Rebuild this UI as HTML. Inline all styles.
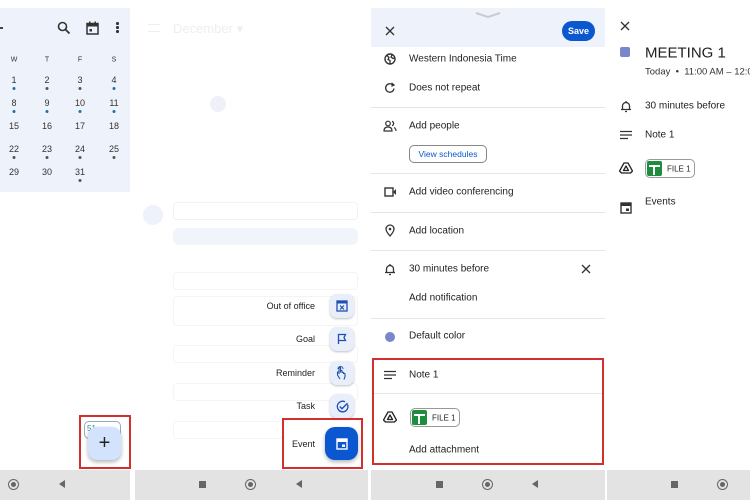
<!DOCTYPE html>
<html><head><meta charset="utf-8"><style>
*{margin:0;padding:0;box-sizing:border-box}
body{width:750px;height:500px;position:relative;overflow:hidden;background:#fff;font-family:"Liberation Sans",sans-serif;color:#1f1f1f}
.a{position:absolute}
.t{position:absolute;font-size:10px;white-space:nowrap;transform:translateY(-50%)}
.c{position:absolute;font-size:9px;transform:translate(-50%,-50%);color:#333}
.dot{position:absolute;width:3px;height:3px;border-radius:50%;background:#1a73a8;transform:translateX(-50%)}
.hr{position:absolute;height:1px;background:#e5e5e5}
.nav{position:absolute;top:470px;height:30px;background:#e3e3e3}
.sq{position:absolute;width:7px;height:7px;background:#666;top:481px}
.ci{position:absolute;width:11px;height:11px;border-radius:50%;border:1.5px solid #666;top:479px}
.ci::after{content:"";position:absolute;left:1.5px;top:1.5px;width:5px;height:5px;border-radius:50%;background:#666}
.tr{position:absolute;top:480px;width:0;height:0;border-top:4px solid transparent;border-bottom:4px solid transparent;border-right:6px solid #666}
.red{position:absolute;border:2px solid #d32f2f}
.sf{position:absolute;width:24px;height:24px;border-radius:7px;background:#e8eefa;box-shadow:0 1px 2px rgba(0,0,0,.25)}
.fl{position:absolute;font-size:9px;transform:translateY(-50%);right:0;text-align:right}
.ico{position:absolute}
</style></head><body>

<!-- Panel 1 -->
<div class="a" style="left:0;top:8px;width:130px;height:184px;background:#eef2fa"></div>
<div class="a" style="left:0;top:27px;width:3px;height:2px;background:#444"></div>
<svg class="ico" style="left:57px;top:21px" width="14" height="14" viewBox="0 0 14 14"><circle cx="5.5" cy="5.5" r="4" fill="none" stroke="#333" stroke-width="1.6"/><line x1="8.5" y1="8.5" x2="12.5" y2="12.5" stroke="#333" stroke-width="1.8"/></svg>
<svg class="ico" style="left:86px;top:21px" width="13" height="14" viewBox="0 0 13 14"><rect x="1" y="2.5" width="11" height="10.5" fill="none" stroke="#333" stroke-width="1.5"/><rect x="1" y="2.5" width="11" height="3" fill="#333"/><rect x="3" y="0.5" width="1.5" height="3" fill="#333"/><rect x="8.5" y="0.5" width="1.5" height="3" fill="#333"/><rect x="3.5" y="8" width="2.5" height="2.5" fill="#333"/></svg>
<div class="a" style="left:116px;top:22px;width:2.5px;height:2.5px;background:#333;border-radius:50%;box-shadow:0 4px 0 #333,0 8px 0 #333"></div>
<div class="c" style="left:14px;top:60px;font-size:7px">W</div><div class="c" style="left:47px;top:60px;font-size:7px">T</div><div class="c" style="left:80px;top:60px;font-size:7px">F</div><div class="c" style="left:114px;top:60px;font-size:7px">S</div>
<div class="c" style="left:14px;top:80px">1</div><div class="c" style="left:47px;top:80px">2</div><div class="c" style="left:80px;top:80px">3</div><div class="c" style="left:114px;top:80px">4</div>
<div class="dot" style="left:14px;top:87px"></div><div class="dot" style="left:47px;top:87px;background:#555"></div><div class="dot" style="left:80px;top:87px;background:#555"></div><div class="dot" style="left:114px;top:87px"></div>
<div class="c" style="left:14px;top:103px">8</div><div class="c" style="left:47px;top:103px">9</div><div class="c" style="left:80px;top:103px">10</div><div class="c" style="left:114px;top:103px">11</div>
<div class="dot" style="left:14px;top:110px"></div><div class="dot" style="left:47px;top:110px"></div><div class="dot" style="left:80px;top:110px"></div><div class="dot" style="left:114px;top:110px"></div>
<div class="c" style="left:14px;top:126px">15</div><div class="c" style="left:47px;top:126px">16</div><div class="c" style="left:80px;top:126px">17</div><div class="c" style="left:114px;top:126px">18</div>
<div class="c" style="left:14px;top:149px">22</div><div class="c" style="left:47px;top:149px">23</div><div class="c" style="left:80px;top:149px">24</div><div class="c" style="left:114px;top:149px">25</div>
<div class="dot" style="left:14px;top:156px;background:#555"></div><div class="dot" style="left:47px;top:156px;background:#555"></div><div class="dot" style="left:80px;top:156px;background:#555"></div><div class="dot" style="left:114px;top:156px;background:#555"></div>
<div class="c" style="left:14px;top:172px">29</div><div class="c" style="left:47px;top:172px">30</div><div class="c" style="left:80px;top:172px">31</div>
<div class="dot" style="left:80px;top:179px;background:#555"></div>
<div class="a" style="left:84px;top:421px;width:37px;height:18px;border:1px solid #9ab;border-radius:5px;font-size:8px;color:#2a8aa8;padding:2px">51</div>
<div class="a" style="left:88px;top:427px;width:33px;height:33px;border-radius:9px;background:#d3e3fd;box-shadow:0 2px 4px rgba(0,0,0,.3);font-size:20px;line-height:32px;text-align:center;color:#222">+</div>
<div class="red" style="left:79px;top:415px;width:52px;height:54px"></div>

<!-- Panel 2 (faded) -->
<div class="a" style="left:135px;top:8px;width:233px;height:462px;background:#fff"></div>
<div class="a" style="left:148px;top:24px;width:12px;height:8px;border-top:1.5px solid #eee;border-bottom:1.5px solid #eee"></div>
<div class="a" style="left:173px;top:21px;font-size:13px;color:#eee">December ▾</div>
<div class="a" style="left:210px;top:96px;width:16px;height:16px;border-radius:50%;background:#eef1f7"></div>
<div class="a" style="left:143px;top:205px;width:20px;height:20px;border-radius:50%;background:#eef3fb"></div>
<div class="a" style="left:173px;top:202px;width:185px;height:18px;border:1px solid #f2f2f2;border-radius:4px"></div>
<div class="a" style="left:173px;top:228px;width:185px;height:17px;background:#f2f4fc;border-radius:6px"></div>
<div class="a" style="left:173px;top:272px;width:185px;height:18px;border:1px solid #f4f4f4;border-radius:4px"></div>
<div class="a" style="left:173px;top:296px;width:185px;height:30px;border:1px solid #f4f4f4;border-radius:4px"></div>
<div class="a" style="left:173px;top:345px;width:185px;height:18px;border:1px solid #f4f4f4;border-radius:4px"></div>
<div class="a" style="left:173px;top:383px;width:185px;height:18px;border:1px solid #f4f4f4;border-radius:4px"></div>
<div class="a" style="left:173px;top:421px;width:110px;height:18px;border:1px solid #f4f4f4;border-radius:4px"></div>
<div class="a" style="left:135px;top:296px;width:180px;height:160px">
<div class="fl" style="top:10px">Out of office</div>
<div class="fl" style="top:43px">Goal</div>
<div class="fl" style="top:77px">Reminder</div>
<div class="fl" style="top:110px">Task</div>
<div class="fl" style="top:148px">Event</div>
</div>
<div class="sf" style="left:330px;top:294px"></div>
<svg class="ico" style="left:336px;top:299px" width="12" height="13" viewBox="0 0 12 13"><rect x="1" y="2" width="10" height="10" fill="none" stroke="#1f4fb0" stroke-width="1.3"/><rect x="1" y="2" width="10" height="2.5" fill="#1f4fb0"/><path d="M4 6.5l4 4M8 6.5l-4 4" stroke="#1f4fb0" stroke-width="1.2"/></svg>
<div class="sf" style="left:330px;top:327px"></div>
<svg class="ico" style="left:337px;top:333px" width="11" height="12" viewBox="0 0 11 12"><path d="M1.5 11V1.5h7l-1.5 3 1.5 3h-7" fill="none" stroke="#1f4fb0" stroke-width="1.3"/></svg>
<div class="sf" style="left:330px;top:361px"></div>
<svg class="ico" style="left:335px;top:365px" width="14" height="15" viewBox="0 0 14 15"><path d="M5 14l-2.5-4V7.5c0-.8 1.5-.8 1.5 0V9V3c0-1 1.5-1 1.5 0v4.5V6c0-1 1.5-1 1.5 0v2c0-1 1.5-1 1.5 0v1c0-1 1.5-1 1.5 0v2.5l-1 3" fill="none" stroke="#1f4fb0" stroke-width="1.1"/><path d="M3 4a2.5 2.5 0 015 0" fill="none" stroke="#1f4fb0" stroke-width="1"/></svg>
<div class="sf" style="left:330px;top:394px"></div>
<svg class="ico" style="left:336px;top:400px" width="13" height="13" viewBox="0 0 13 13"><path d="M11.5 4.5A5.3 5.3 0 1 1 9 1.8" fill="none" stroke="#1f4fb0" stroke-width="1.3"/><path d="M3.8 6.5l2.2 2.2 5.5-5.5" fill="none" stroke="#1f4fb0" stroke-width="1.4"/></svg>
<div class="a" style="left:325px;top:427px;width:33px;height:33px;border-radius:10px;background:#0b57d0;box-shadow:0 2px 4px rgba(0,0,0,.3)"></div>
<svg class="ico" style="left:336px;top:437px" width="12" height="13" viewBox="0 0 12 13"><rect x="1" y="2" width="10" height="10" fill="none" stroke="#fff" stroke-width="1.4"/><rect x="1" y="2" width="10" height="3" fill="#fff"/><rect x="6" y="7.5" width="3" height="2.5" fill="#fff"/></svg>
<div class="red" style="left:282px;top:418px;width:81px;height:51px"></div>

<!-- Panel 3 -->
<div class="a" style="left:371px;top:8px;width:234px;height:39px;background:#eef2fa"></div>
<svg class="ico" style="left:475px;top:12px" width="26" height="6" viewBox="0 0 26 6"><path d="M1 1l12 4 12-4" fill="none" stroke="#c9ccd2" stroke-width="2"/></svg>
<svg class="ico" style="left:385px;top:26px" width="10" height="10" viewBox="0 0 10 10"><path d="M1 1l8 8M9 1l-8 8" stroke="#333" stroke-width="1.3"/></svg>
<div class="a" style="left:562px;top:21px;width:33px;height:20px;border-radius:10px;background:#0b57d0;color:#fff;font-size:9px;font-weight:bold;text-align:center;line-height:20px">Save</div>
<svg class="ico" style="left:384px;top:53px" width="12" height="12" viewBox="0 0 12 12"><circle cx="6" cy="6" r="5" fill="none" stroke="#333" stroke-width="1.4"/><path d="M3 2.5l2 2-1 2 2 1v3M8 2l-1 2 2 1.5 1.5-.5" fill="none" stroke="#333" stroke-width="1.3"/></svg>
<div class="t" style="left:409px;top:59px">Western Indonesia Time</div>
<svg class="ico" style="left:384px;top:82px" width="12" height="12" viewBox="0 0 12 12"><path d="M10 6.5A4.2 4.2 0 1 1 8.8 3" fill="none" stroke="#333" stroke-width="1.3"/><path d="M7.5 1l2.5 2-2.7 1.3" fill="none" stroke="#333" stroke-width="1.3"/></svg>
<div class="t" style="left:409px;top:88px">Does not repeat</div>
<div class="hr" style="left:371px;top:107px;width:234px"></div>
<svg class="ico" style="left:383px;top:120px" width="14" height="12" viewBox="0 0 14 12"><circle cx="5" cy="3.5" r="2.3" fill="none" stroke="#333" stroke-width="1.2"/><path d="M1 11c0-3 2-4 4-4s4 1 4 4z" fill="none" stroke="#333" stroke-width="1.2"/><path d="M9 1.3a2.3 2.3 0 010 4.4M11 7.5c1 .5 2 1.5 2 3.5" fill="none" stroke="#333" stroke-width="1.2"/></svg>
<div class="t" style="left:409px;top:126px">Add people</div>
<div class="a" style="left:409px;top:145px;width:78px;height:18px;border:1px solid #888;border-radius:5px;font-size:8.5px;color:#0b57d0;text-align:center;line-height:16px">View schedules</div>
<div class="hr" style="left:371px;top:173px;width:234px"></div>
<svg class="ico" style="left:384px;top:187px" width="13" height="10" viewBox="0 0 13 10"><rect x="1" y="1" width="8" height="8" fill="none" stroke="#333" stroke-width="1.4"/><path d="M9 5l3-3v6z" fill="#333"/></svg>
<div class="t" style="left:409px;top:192px">Add video conferencing</div>
<div class="hr" style="left:371px;top:212px;width:234px"></div>
<svg class="ico" style="left:385px;top:224px" width="10" height="13" viewBox="0 0 10 13"><path d="M5 12S1 7.5 1 5a4 4 0 018 0c0 2.5-4 7-4 7z" fill="none" stroke="#333" stroke-width="1.3"/><circle cx="5" cy="5" r="1.3" fill="#333"/></svg>
<div class="t" style="left:409px;top:231px">Add location</div>
<div class="hr" style="left:371px;top:250px;width:234px"></div>
<svg class="ico" style="left:384px;top:263px" width="12" height="13" viewBox="0 0 12 13"><path d="M2.5 9.5V6a3.5 3.5 0 017 0v3.5H11H1zM5 11.5h2M6 1v1.3" fill="none" stroke="#333" stroke-width="1.3"/></svg>
<div class="t" style="left:409px;top:269px">30 minutes before</div>
<svg class="ico" style="left:581px;top:264px" width="10" height="10" viewBox="0 0 10 10"><path d="M1 1l8 8M9 1l-8 8" stroke="#333" stroke-width="1.3"/></svg>
<div class="t" style="left:409px;top:298px">Add notification</div>
<div class="hr" style="left:371px;top:318px;width:234px"></div>
<div class="a" style="left:385px;top:332px;width:10px;height:10px;border-radius:50%;background:#7986cb"></div>
<div class="t" style="left:409px;top:336px">Default color</div>
<svg class="ico" style="left:384px;top:370px" width="12" height="10" viewBox="0 0 12 10"><path d="M0 1.5h12M0 5h12M0 8.5h8" stroke="#333" stroke-width="1.3"/></svg>
<div class="t" style="left:409px;top:375px">Note 1</div>
<div class="hr" style="left:373px;top:393px;width:229px"></div>
<svg class="ico" style="left:383px;top:411px" width="14" height="12" viewBox="0 0 14 12"><path d="M5 1h4l4.5 8-2 2h-9l-2-2z M7 4l2.5 4.5h-5z" fill="none" stroke="#222" stroke-width="1.3" stroke-linejoin="round"/></svg>
<div class="a" style="left:410px;top:408px;width:50px;height:19px;border:1px solid #999;border-radius:5px"></div>
<div class="a" style="left:412px;top:410px;width:15px;height:15px;background:#1e8e3e;border-radius:2px"></div>
<div class="a" style="left:414px;top:414px;width:11px;height:1.5px;background:#fff"></div>
<div class="a" style="left:418px;top:414px;width:1.5px;height:10px;background:#fff"></div>
<div class="t" style="left:432px;top:417.5px;font-size:8px">FILE 1</div>
<div class="t" style="left:409px;top:450px">Add attachment</div>
<div class="red" style="left:372px;top:358px;width:232px;height:107px"></div>

<!-- Panel 4 -->
<svg class="ico" style="left:620px;top:21px" width="10" height="10" viewBox="0 0 10 10"><path d="M1 1l8 8M9 1l-8 8" stroke="#333" stroke-width="1.3"/></svg>
<div class="a" style="left:620px;top:47px;width:10px;height:10px;border-radius:2px;background:#7986cb"></div>
<div class="t" style="left:645px;top:53px;font-size:15px">MEETING 1</div>
<div class="t" style="left:645px;top:72px;font-size:9.5px;color:#333">Today &nbsp;•&nbsp; 11:00 AM – 12:00 PM</div>
<svg class="ico" style="left:620px;top:100px" width="12" height="13" viewBox="0 0 12 13"><path d="M2.5 9.5V6a3.5 3.5 0 017 0v3.5H11H1zM5 11.5h2M6 1v1.3" fill="none" stroke="#333" stroke-width="1.3"/></svg>
<div class="t" style="left:645px;top:106px">30 minutes before</div>
<svg class="ico" style="left:620px;top:130px" width="12" height="10" viewBox="0 0 12 10"><path d="M0 1.5h12M0 5h12M0 8.5h8" stroke="#333" stroke-width="1.3"/></svg>
<div class="t" style="left:645px;top:135px">Note 1</div>
<svg class="ico" style="left:619px;top:162px" width="14" height="12" viewBox="0 0 14 12"><path d="M5 1h4l4.5 8-2 2h-9l-2-2z M7 4l2.5 4.5h-5z" fill="none" stroke="#222" stroke-width="1.3" stroke-linejoin="round"/></svg>
<div class="a" style="left:645px;top:159px;width:50px;height:19px;border:1px solid #999;border-radius:5px"></div>
<div class="a" style="left:647px;top:161px;width:15px;height:15px;background:#1e8e3e;border-radius:2px"></div>
<div class="a" style="left:649px;top:165px;width:11px;height:1.5px;background:#fff"></div>
<div class="a" style="left:653px;top:165px;width:1.5px;height:10px;background:#fff"></div>
<div class="t" style="left:667px;top:168.5px;font-size:8px">FILE 1</div>
<svg class="ico" style="left:620px;top:201px" width="12" height="13" viewBox="0 0 12 13"><rect x="1" y="2" width="10" height="10" fill="none" stroke="#333" stroke-width="1.4"/><rect x="1" y="2" width="10" height="3" fill="#333"/><rect x="6" y="7.5" width="3" height="2.5" fill="#333"/></svg>
<div class="t" style="left:645px;top:202px">Events</div>

<!-- Nav bars -->
<div class="nav" style="left:0;width:130px"></div>
<div class="nav" style="left:135px;width:233px"></div>
<div class="nav" style="left:371px;width:234px"></div>
<div class="nav" style="left:607px;width:143px"></div>
<div class="ci" style="left:8px"></div><div class="tr" style="left:59px"></div>
<div class="sq" style="left:199px"></div><div class="ci" style="left:245px"></div><div class="tr" style="left:296px"></div>
<div class="sq" style="left:436px"></div><div class="ci" style="left:482px"></div><div class="tr" style="left:532px"></div>
<div class="sq" style="left:671px"></div><div class="ci" style="left:717px"></div>
</body></html>
